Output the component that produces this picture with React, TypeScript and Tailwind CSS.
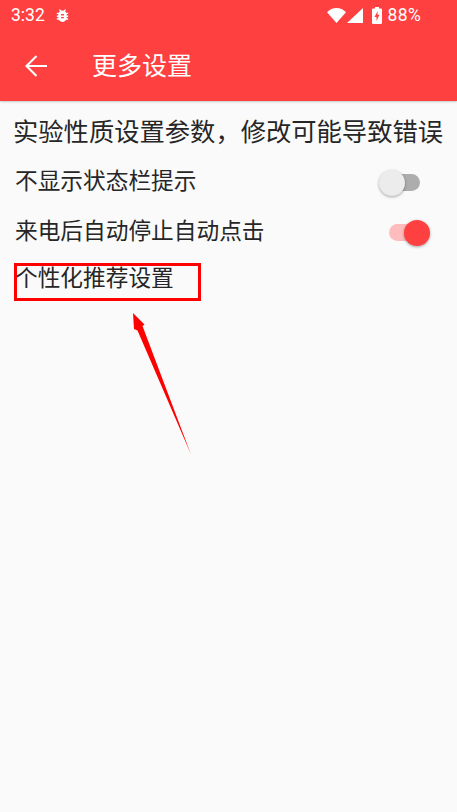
import React from 'react';

const CJK = 'font-["Roboto","Noto_Sans_CJK_SC",sans-serif]';

function Bug() {
  return (
    <svg viewBox="0 0 24 24" className="w-[17px] h-[17px]" fill="#fff">
      <path d="M20 8h-2.810a5.985 5.985 0 0 0-1.820-1.960L17 4.410 15.590 3l-2.170 2.170a6.002 6.002 0 0 0-2.830 0L8.410 3 7 4.410l1.620 1.630C7.880 6.550 7.260 7.220 6.810 8H4v2h2.090c-.05.33-.09.66-.09 1v1H4v2h2v1c0 .34.04.67.09 1H4v2h2.810c1.040 1.790 2.970 3 5.190 3s4.150-1.210 5.190-3H20v-2h-2.090c.05-.33.09-.66.09-1v-1h2v-2h-2v-1c0-.34-.04-.67-.09-1H20V8zm-6 8h-4v-2h4v2zm0-4h-4v-2h4v2z" />
    </svg>
  );
}

function StatusIcons() {
  return (
    <div className="flex items-center">
      <svg viewBox="0 0 19 15" className="h-[15px] w-[19px]" fill="#fff">
        <path d="M9.500 15 0 4.200C2.600 1.600 5.900 0 9.500 0s6.900 1.600 9.500 4.200L9.500 15z" />
      </svg>
      <svg viewBox="0 0 16 15" className="ml-[1px] h-[15px] w-[16px]" fill="#fff">
        <path d="M16 0v15H0z" />
      </svg>
      <svg viewBox="0 0 10 17" className="ml-[9px] h-[17px] w-[10px]" fill="#fff">
        <path fillRule="evenodd" d="M3 0h4v1.500h2a1 1 0 0 1 1 1V16a1 1 0 0 1-1 1H1a1 1 0 0 1-1-1V2.500a1 1 0 0 1 1-1h2V0zM5.700 4 2.500 10h2v4l3-6.200h-2L5.700 4z" />
      </svg>
      <span className="ml-[6px] text-[17.500px] leading-none tracking-[0.3px] text-white">88%</span>
    </div>
  );
}

function Toggle({ on }: { on: boolean }) {
  return (
    <div className={`relative mr-[37px] h-[17px] w-[31px] rounded-full ${on ? 'bg-[#ffbcbc]' : 'bg-[#adadad]'}`}>
      <div
        className={`absolute top-[-4px] h-[26px] w-[26px] rounded-full shadow-[0_1px_3px_rgba(0,0,0,0.35)] ${
          on ? 'right-[-10px] bg-[#ff4040]' : 'left-[-10px] bg-[#ececec]'
        }`}
      />
    </div>
  );
}

function SettingRow({ label, on }: { label: string; on: boolean }) {
  return (
    <div className="flex h-[50px] items-center justify-between pl-[15px]">
      <span className="text-[22.700px] leading-none text-[#262626]">{label}</span>
      <Toggle on={on} />
    </div>
  );
}

export default function App() {
  return (
    <div className={`relative flex h-[812px] w-[457px] flex-col overflow-hidden bg-[#fafafa] ${CJK}`}>
      <header className="h-[101px] shrink-0 bg-[#ff4040] shadow-[0_1px_2px_rgba(0,0,0,0.2)]">
        <div className="flex h-[31px] items-center justify-between pl-[11px] pr-[36px]">
          <div className="flex items-center gap-[9px]">
            <span className="text-[17.500px] leading-none text-white">3:32</span>
            <Bug />
          </div>
          <StatusIcons />
        </div>
        <div className="flex h-[70px] items-center pl-[24px]">
          <svg viewBox="0 0 24 24" className="h-[24px] w-[24px]" fill="none" stroke="#fff" strokeWidth="2.100">
            <path d="M23 12H2.500M12.500 2 2.500 12l10 10" />
          </svg>
          <span className="ml-[44px] text-[25px] leading-none text-white">更多设置</span>
        </div>
      </header>

      <main className="flex flex-col">
        <div className="flex h-[56px] items-center pl-[13px] pt-[8px] text-[25.300px] leading-none whitespace-nowrap text-[#262626]">
          {'实验性质设置参数\uFF0C修改可能导致错误'}
        </div>
        <SettingRow label="不显示状态栏提示" on={false} />
        <SettingRow label="来电后自动停止自动点击" on={true} />
        <div className="pl-[15px] pt-[7px] text-[22.700px] leading-[30px] text-[#262626]">个性化推荐设置</div>
      </main>

      {/* annotation drawn over the screenshot */}
      <div className="absolute left-[14px] top-[263px] h-[38px] w-[187px] border-[3px] border-[#ff0000]" />
      <svg viewBox="0 0 457 812" className="pointer-events-none absolute left-0 top-0 h-[812px] w-[457px]">
        <path d="M133 313 144.500 324.500 142.500 326 190.800 454 137.500 330.500 134 329z" fill="#ff0000" />
      </svg>
    </div>
  );
}
